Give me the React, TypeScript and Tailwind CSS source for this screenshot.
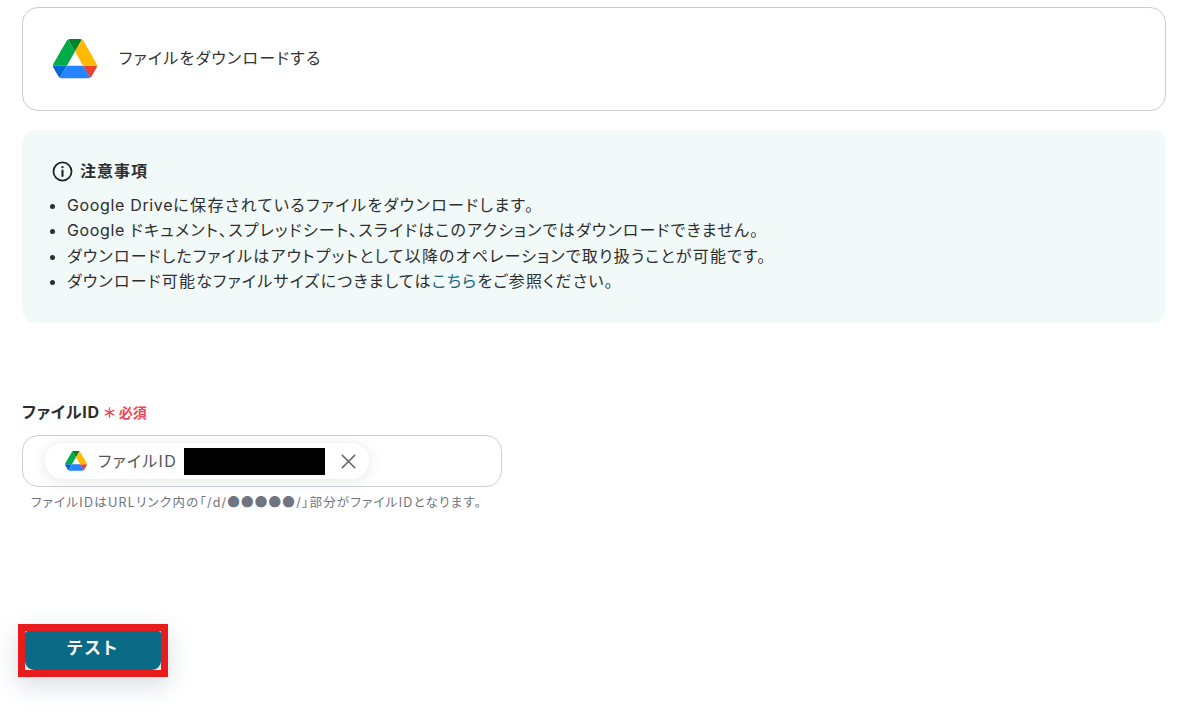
import { X } from "lucide-react";

function DriveIcon({ size }: { size: number }) {
  return (
    <svg viewBox="0 0 87.3 78" width={size} height={(size * 78) / 87.3} className="shrink-0">
      <path d="m6.6 66.85 3.85 6.65c.8 1.4 1.95 2.5 3.3 3.3l13.75-23.8h-27.5c0 1.55.4 3.1 1.2 4.5z" fill="#0066da" />
      <path d="m43.65 25-13.75-23.8c-1.35.8-2.5 1.9-3.3 3.3l-25.4 44a9.06 9.06 0 0 0-1.2 4.5h27.5z" fill="#00ac47" />
      <path d="m73.55 76.8c1.35-.8 2.5-1.9 3.3-3.3l1.6-2.75 7.65-13.25c.8-1.4 1.2-2.95 1.2-4.5h-27.502l5.852 11.5z" fill="#ea4335" />
      <path d="m43.65 25 13.75-23.8c-1.35-.8-2.9-1.2-4.5-1.2h-18.5c-1.6 0-3.15.45-4.5 1.2z" fill="#00832d" />
      <path d="m59.8 53h-32.3l-13.75 23.8c1.35.8 2.9 1.2 4.5 1.2h50.8c1.6 0 3.15-.45 4.5-1.2z" fill="#2684fc" />
      <path d="m73.4 26.5-12.7-22c-.8-1.4-1.95-2.5-3.3-3.3l-13.75 23.8 16.15 28h27.45c0-1.55-.4-3.1-1.2-4.5z" fill="#ffba00" />
    </svg>
  );
}

const google = "tracking-[0.65px]";

const notes = [
  <>
    <span className={google}>Google Drive</span>
    <span className="tracking-[1.45px]">に保存されているファイルをダウンロードします。</span>
  </>,
  <>
    <span className={google}>Google </span>ドキュメント、スプレッドシート、スライドはこのアクションではダウンロードできません。
  </>,
  <>ダウンロードしたファイルはアウトプットとして以降のオペレーションで取り扱うことが可能です。</>,
  <>
    ダウンロード可能なファイルサイズにつきましては<span className="text-[#0b6a85]">こちら</span>をご参照ください。
  </>,
];

export default function App() {
  return (
    <div className="h-[712px] w-[1183px] overflow-hidden bg-white pl-[22px] pr-[17px] pt-[7px] font-['Inter','Noto_Sans_CJK_JP',sans-serif] text-[#2e2e2e] [font-feature-settings:'palt']">
      {/* Action card */}
      <div className="flex h-[104px] items-center rounded-[16px] border border-[#cccccc] pl-[30px]">
        <DriveIcon size={44} />
        <span className="ml-[22px] pb-[2px] text-[16px] tracking-[1.25px] text-[#333333]">ファイルをダウンロードする</span>
      </div>

      {/* Notes */}
      <div className="mt-[19px] h-[193px] rounded-[14px] bg-[#f2f9f9] pl-[30px] pt-[29px]">
        <div className="flex items-center gap-[7px]">
          <svg viewBox="0 0 20 20" width="21" height="21" fill="none" stroke="#222222" strokeWidth="1.7" strokeLinecap="round">
            <circle cx="10" cy="10" r="8.6" />
            <line x1="10" y1="9.2" x2="10" y2="14.3" strokeWidth="2" />
            <circle cx="10" cy="5.9" r="1.1" fill="#222222" stroke="none" />
          </svg>
          <span className="text-[16px] font-bold leading-[24px] tracking-[1px] text-[#2e2e2e]">注意事項</span>
        </div>
        <ul className="mt-[10px] list-disc pl-[15px] text-[16px] leading-[25.3px] tracking-[1.23px] text-[#2e2e2e]">
          {notes.map((note, i) => (
            <li key={i}>{note}</li>
          ))}
        </ul>
      </div>

      {/* File ID field */}
      <div className="mt-[78px] flex h-[22px] items-center">
        <span className="text-[16px] font-bold tracking-[0.8px] text-[#2e2e2e]">ファイルID</span>
        <span className="ml-[4px] text-[14px] font-bold text-[#f0455a]">＊ 必須</span>
      </div>
      <div className="mt-[12px] flex h-[52px] w-[480px] items-center rounded-[16px] border border-[#ccd0d8] pl-[22px]">
        <div className="flex h-[36px] w-[324px] items-center rounded-full bg-white pl-[20px] shadow-[0_2px_16px_rgba(0,0,0,0.1)]">
          <DriveIcon size={22} />
          <span className="ml-[11px] text-[16px] tracking-[1.3px] text-[#555555]">ファイルID</span>
          <div className="ml-[7px] h-[27px] w-[141px] bg-black" />
          <X size={25} strokeWidth={1.6} className="ml-[11px] text-[#666666]" />
        </div>
      </div>
      <p className="mt-[7px] pl-[9px] text-[12.5px] leading-[16px] tracking-[1.25px] text-[#6e7480]">
        ファイルIDはURLリンク内の「/d/<span className="font-['Noto_Sans_CJK_JP',sans-serif]">●●●●●</span>/」部分がファイルIDとなります。
      </p>

      {/* Test button, red annotation frame */}
      <div className="-ml-[4px] mt-[113px] h-[53px] w-[150px] border-[7px] border-[#e81c1c] bg-[#e8e8e8] shadow-[0_8px_24px_rgba(40,60,90,0.18)]">
        <button className="flex h-full w-full items-center justify-center rounded-t-[3px] rounded-b-[9px] bg-[#0b6a85] pb-[3px] text-[17px] font-bold tracking-[2px] text-white">
          テスト
        </button>
      </div>
    </div>
  );
}
